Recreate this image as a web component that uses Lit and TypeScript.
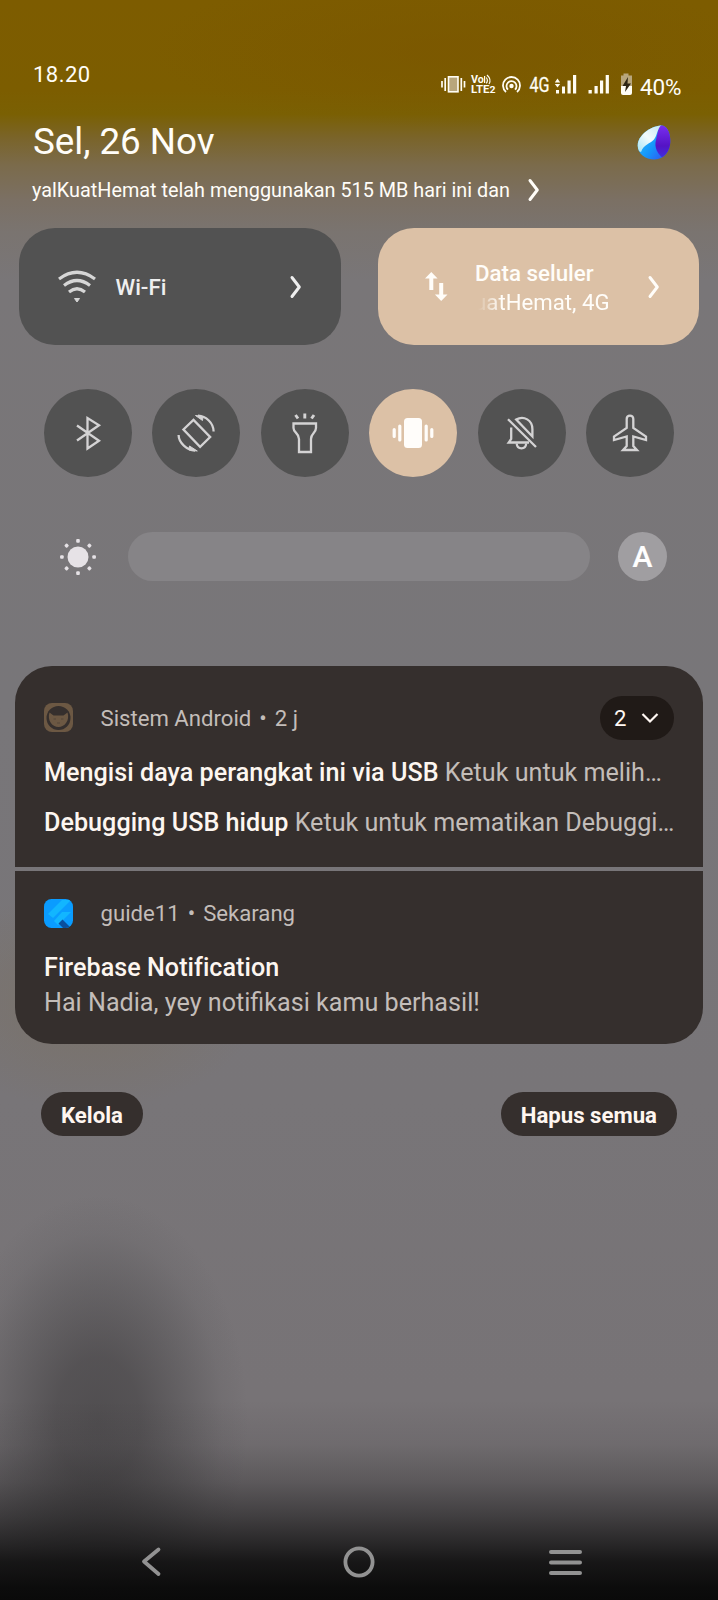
import { LitElement, html, css, svg } from "lit";
import { customElement } from "lit/decorators.js";

const chevron = html`<svg class="chev" viewBox="0 0 12 22" width="12" height="22"><path d="M2 1.500 9.300 11 2 20.500" fill="none" stroke="currentColor" stroke-width="3" stroke-linecap="round" stroke-linejoin="round"/></svg>`;

const toggles = [
  { on: false, art: svg`<path d="M-11-7.500 11 7.800-.500 15.500V-15L11-7.800-11 7.500"/>` },
  { on: false, art: svg`<rect x="-7" y="-12" width="14" height="24" transform="translate(.8 .3) rotate(-44)"/><path d="M2-17.300C10-17 17.500-10 17.600-1.500"/><path d="M-.500-17.500 6.500-12.500 7-16.500Z" fill="currentColor" stroke-width="1"/><path d="M-1 17.500C-9 17-17.300 10-17.400 2"/><path d="M1.300 18-6.500 13-7 17Z" fill="currentColor" stroke-width="1"/>` },
  { on: false, art: svg`<path d="M-11.500-9.500H11V-5C11 0 6 0 6 6V19H-6V6C-6 0-11.500 0-11.500-5Z"/><path stroke-width="2.900" d="M-.200-19.500V-14.500M-9.500-18-7-14.500M9-18 6.500-14.500"/>` },
  { on: true, art: svg`<rect x="-9" y="-15" width="18" height="30" rx="3.500" fill="currentColor" stroke="none"/><path stroke-width="3.200" stroke-linecap="round" d="M-13.200-7V7M13.200-7V7M-18.800-3.500V3.500M18.800-3.500V3.500"/>` },
  { on: false, art: svg`<path d="M-10.800-5.500V6L-13.300 9.500H7"/><path d="M-5.800-13.500C2-18 10.400-12.500 10.400-4V3.500Z"/><path d="M-5.300 10.500C-4.800 17 3.700 17 4.200 10.500M-14-13.800 14 14"/>` },
  { on: false, art: svg`<path d="M-3.300-14C-3.300-18.500 3.300-18.500 3.300-14V-5L16 3.500V7L3.300 3.500V13L7 17H-7L-3.300 13V3.500L-16 7V3.500L-3.300-5Z"/>` },
];

@customElement("app-root")
export class AppRoot extends LitElement {
  static styles = css`
    :host { display: block; font-family: Roboto, "Noto Sans", sans-serif; color: #fffdf8; }
    * { box-sizing: border-box; }
    svg { display: block; flex: none; overflow: visible; }
    .screen {
      width: 718px; height: 1600px; overflow: hidden; display: flex; flex-direction: column; white-space: nowrap;
      background:
        linear-gradient(to bottom, rgba(10,10,10,0) 1400px, rgba(10,10,10,.08) 1445px, rgba(10,10,10,.25) 1482px, rgba(10,10,10,.5) 1517px, rgba(10,10,10,.73) 1545px, rgba(10,10,10,.88) 1562px, rgba(10,10,10,.98) 1588px, #0a0a0a 1600px),
        radial-gradient(ellipse 150px 225px at 98px 1420px, rgba(66,64,66,.72) 0%, rgba(66,64,66,.64) 28%, rgba(68,67,69,.34) 60%, rgba(70,70,72,.1) 83%, rgba(70,70,72,0) 100%),
        radial-gradient(ellipse 170px 110px at 90px 1000px, rgba(122,112,98,.75), rgba(122,112,98,0)),
        radial-gradient(ellipse 300px 80px at 450px 50px, rgba(122,84,0,.5), rgba(122,84,0,0)),
        linear-gradient(to bottom, #7d5c00 0, #7c5d00 90px, #7a6003 114px, #7a642a 138px, #7b6b4b 165px, #7b7064 200px, #7a7470 232px, #797678 280px, #787679 700px, #787578 1100px, #777376 1390px, #777276 1600px);
    }
    .screen > * { flex: none; }
    .status { height: 111px; display: flex; align-items: flex-start; padding: 62px 0 0 33px; font-size: 22px; line-height: 26px; }
    .time { width: 408px; letter-spacing: .45px; }
    .glyphs { padding-top: 10px; width: 199px; }
    .pct { padding-top: 12px; font-size: 22.500px; letter-spacing: -.2px; }
    .date { height: 61px; display: flex; justify-content: space-between; padding: 10px 47px 0 33px; font-size: 36.800px; line-height: 42px; letter-spacing: -.05px; }
    .orb { margin-top: 4px; }
    .usage { height: 56px; display: flex; align-items: flex-start; gap: 19px; padding: 7px 0 0 32px; font-size: 19.830px; line-height: 24px; }
    .usage span { width: 477px; }
    .tiles { display: flex; justify-content: space-between; padding: 0 19px; height: 117px; }
    .tile { width: 321.500px; border-radius: 36px; background: #525252; display: flex; align-items: center; padding: 0 38.500px; font-size: 22.300px; line-height: 29px; font-weight: 500; color: #efefef; }
    .tile.on { background: #dcc1a6; color: #fffdf9; padding: 0 39.500px 0 47.500px; }
    .tile .name { flex: 1; padding: 2px 0 0 20px; }
    .tile.on .name { padding-left: 27px; }
    .carrier { font-size: 22.200px; font-weight: 400; width: 134.500px; display: flex; justify-content: flex-end; overflow: hidden; -webkit-mask-image: linear-gradient(to right, transparent 3px, #000 26px); mask-image: linear-gradient(to right, transparent 3px, #000 26px); }
    .toggles { display: flex; justify-content: space-between; padding: 44px 44px 0; height: 187px; }
    .toggle { width: 88px; height: 88px; border-radius: 50%; background: #525252; color: #d4d3d4; display: grid; place-items: center; }
    .toggle.on { background: #dcc1a6; color: #fffdfa; }
    .bright { height: 49px; display: flex; align-items: center; padding: 0 51px 0 59px; }
    .track { width: 462px; height: 49px; border-radius: 25px; background: #868487; margin: 0 28px 0 31px; }
    .auto { width: 49px; height: 49px; border-radius: 50%; background: #a09ea1; color: #fff; display: grid; place-items: center; font-weight: 500; font-size: 30px; line-height: 48px; -webkit-text-stroke: .2px #fff; }
    .cards { margin: 84.500px 15px 0; display: flex; flex-direction: column; gap: 4px; border-radius: 37px; overflow: hidden; }
    .card { background: #352f2d; padding: 0 29px; color: #c3bdb9; font-size: 25.150px; }
    .first { height: 201px; padding-top: 30px; }
    .second { height: 173.500px; padding-top: 28px; }
    .head { display: flex; align-items: center; font-size: 22.150px; line-height: 29px; height: 44px; }
    .second .head { height: 29px; }
    .src { flex: 1; padding-left: 27.500px; padding-top: 1px; }
    .dot { padding: 0 8px; }
    .count { width: 74px; height: 44px; border-radius: 22px; background: #201a17; color: #fff8f3; display: flex; align-items: center; justify-content: space-between; padding: 2px 15px 0 14px; }
    .line { line-height: 30px; margin-top: 18.500px; }
    .line + .line { margin-top: 19.500px; }
    b { font-weight: 500; color: #fdf6f0; letter-spacing: .03px; }
    .title { line-height: 30px; margin-top: 25px; }
    .body { line-height: 30px; margin-top: 5px; }
    .actions { display: flex; justify-content: space-between; align-items: flex-start; padding: 47.500px 41px 0; height: 479px; }
    .btn { height: 44px; border-radius: 22px; background: #352f2d; color: #fff6f0; font-weight: 700; font-size: 22.200px; line-height: 46px; padding: 0 20px; }
    .nav { display: flex; justify-content: space-between; align-items: center; padding: 0 136px 0 141px; height: 77px; color: #929292; }
  `;

  render() {
    return html`
      <div class="screen">
        <div class="status">
          <div class="time">18.20</div>
          <div class="glyphs">
            <svg width="195" height="26" viewBox="441 72 195 26" fill="none" stroke="#fffdf4">
              <rect x="448.500" y="76.800" width="9.500" height="15" fill="#b8a67c" stroke-width="1.600"/>
              <path d="M445.200 78V91M461.300 78V91M442 81V87.500M464.500 81V87.500" stroke-width="1.700"/>
              <g fill="#fffdf4" stroke="none" font-weight="700">
                <text x="471" y="83" font-size="10" textLength="12.800" lengthAdjust="spacingAndGlyphs">Vo</text>
                <text x="471" y="93.300" font-size="10" textLength="18.300" lengthAdjust="spacingAndGlyphs">LTE</text>
                <text x="489.500" y="93.300" font-size="8.500" textLength="6" lengthAdjust="spacingAndGlyphs">2</text>
              </g>
              <path d="M484.600 76V83M486.300 77.500Q488.500 80.500 486.300 83.300M487 75Q491.800 79.500 489 84" stroke-width="1.200"/>
              <circle cx="511.500" cy="86" r="2.200" fill="#fffdf4" stroke="none"/>
              <path d="M508 89.700A5 5 0 1 1 515 89.700M506 92A8.500 8.500 0 1 1 517 92" stroke-width="1.800"/>
              <text x="529.500" y="91.500" fill="#fffdf4" stroke="#fffdf4" stroke-width=".3" font-size="19.500" textLength="20" lengthAdjust="spacingAndGlyphs">4G</text>
              <path fill="#fffdf4" stroke="none" d="M554.800 82.500 557.500 78.500 560.200 82.500ZM554.800 84 557.500 87.500 560.200 84ZM556 90h3v3.500h-3ZM562 86.500h3v7h-3ZM567.500 80.500h3.200v13h-3.200ZM573 75h3.200v18.500h-3.200ZM588.500 90h3.300v3.500h-3.300ZM594.500 86h3.200v7.500h-3.200ZM600 80.500h3.200v13H600ZM605.700 75h3.200v18.500h-3.200Z"/>
              <path d="M623.500 73.500h5v2h3.500v11h-11v-11h2.500Z" fill="#b8a67c" stroke="none"/><path d="M621 86h11v7a2 2 0 0 1-2 2h-7a2 2 0 0 1-2-2Z" fill="#fffdf4" stroke="none"/>
              <path d="M628 77 622.500 86H626L625 92 631 83.500H627.500Z" fill="#2e2614" stroke="none"/>
            </svg>
          </div>
          <div class="pct">40%</div>
        </div>
        <div class="date">
          <span>Sel, 26 Nov</span>
          <svg class="orb" width="34" height="35" viewBox="0 0 34 35">
            <defs>
              <linearGradient id="o1" x1="0" y1="0" x2="0" y2="1"><stop stop-color="#7a2ff0"/><stop offset=".6" stop-color="#5413c4"/><stop offset="1" stop-color="#3b35e6"/></linearGradient>
              <linearGradient id="o2" x1="0" y1="0" x2="1" y2=".8"><stop stop-color="#2ed0ff"/><stop offset=".6" stop-color="#1594fa"/><stop offset="1" stop-color="#3450f0"/></linearGradient>
              <linearGradient id="o3" x1="0" y1="1" x2="1" y2="0"><stop stop-color="#9fe2f5"/><stop offset=".5" stop-color="#f2fbfd"/><stop offset="1" stop-color="#c4e6f2"/></linearGradient>
              <clipPath id="oc"><path d="M24 .600C29.500 .300 33.300 7 33.300 16.500 33.300 26 27 34.500 17.500 34.500 8 34.500 .700 28.500 .700 20.500 .700 11 13 1.200 24 .600Z"/></clipPath>
            </defs>
            <g clip-path="url(#oc)"><rect width="34" height="35" fill="url(#o2)"/><path d="M23 0H34V35H28C20 29 17 22 19 15 20.500 9 21 4 23 0Z" fill="url(#o1)"/><path d="M-1 0H24.500C20 4 20.500 10 17 14.500 13 19 7 19 4 27L-1 25Z" fill="url(#o3)"/></g>
          </svg>
        </div>
        <div class="usage"><span>yalKuatHemat telah menggunakan 515 MB hari ini dan</span>${chevron}</div>
        <div class="tiles">
          <div class="tile">
            <svg width="38" height="34" viewBox="0 0 38 34" fill="none" stroke="#d6d6d6" stroke-width="3.200"><path d="M1 9Q19-4.500 37 9M6 15.500Q19 5.500 32 15.500M11 22Q19 15.500 27 22"/><path d="M16.500 28.500H21.500L19 32Z" fill="#d6d6d6" stroke-width="1"/></svg>
            <div class="name">Wi-Fi</div>${chevron}
          </div>
          <div class="tile on">
            <svg width="23" height="29" viewBox="0 0 23 29" fill="currentColor"><path d="M6.300 0 12.600 6.500H8.300V18H4.300V6.500H0ZM16.200 29 9.900 22.500H14.200V11H18.200V22.500H22.500Z"/></svg>
            <div class="name">Data seluler<div class="carrier">uatHemat, 4G</div></div>${chevron}
          </div>
        </div>
        <div class="toggles">
          ${toggles.map((t) => html`<div class="toggle ${t.on ? "on" : ""}"><svg width="44" height="44" viewBox="-22 -22 44 44" fill="none" stroke="currentColor" stroke-width="2.300">${t.art}</svg></div>`)}
        </div>
        <div class="bright">
          <svg width="38" height="38" viewBox="-19 -19 38 38" fill="#e6e2e6"><circle r="10.500"/>
            ${[0, 45, 90, 135, 180, 225, 270, 315].map((a) => svg`<rect x="14.300" y="-1.800" width="3.600" height="3.600" rx="1" transform="rotate(${a})"/>`)}
          </svg>
          <div class="track"></div>
          <div class="auto">A</div>
        </div>
        <div class="cards">
          <div class="card first">
            <div class="head">
              <svg width="29" height="29" viewBox="0 0 29 29"><rect width="29" height="29" rx="8" fill="#6c5843"/><circle cx="14.500" cy="15" r="12" fill="#352f2d"/><path d="M5.500 9.500 9.500 12.500H19.500L23.500 9.500C26 17 21 24 14.500 24S3 17 5.500 9.500Z" fill="#6c5843"/><path d="M9.500 16h2.500M17 16h2.500M13 20h3" stroke="#55473a" stroke-width="1.200"/></svg>
              <div class="src">Sistem Android<span class="dot">•</span>2 j</div>
              <div class="count">2<svg width="18" height="11" viewBox="0 0 18 11"><path d="M1.500 1 9 8.500 16.500 1" fill="none" stroke="currentColor" stroke-width="2.200"/></svg></div>
            </div>
            <div class="line"><b>Mengisi daya perangkat ini via USB</b> Ketuk untuk melih…</div>
            <div class="line"><b>Debugging USB hidup</b> Ketuk untuk mematikan Debuggi…</div>
          </div>
          <div class="card second">
            <div class="head">
              <svg width="29" height="29" viewBox="0 0 29 29"><defs><clipPath id="fc"><rect width="29" height="29" rx="7.500"/></clipPath></defs><g clip-path="url(#fc)"><rect width="29" height="29" fill="#0a9cff"/><path d="M4 15 18 1H27L9 19Z" fill="#12b6ff"/><path d="M10 22 18 13H27L14 26Z" fill="#12b6ff"/><path d="M14.500 24.500 18.500 20.500 28 30H20Z" fill="#0a4f9e"/></g></svg>
              <div class="src">guide11<span class="dot">•</span>Sekarang</div>
            </div>
            <div class="title"><b>Firebase Notification</b></div>
            <div class="body">Hai Nadia, yey notifikasi kamu berhasil!</div>
          </div>
        </div>
        <div class="actions"><div class="btn">Kelola</div><div class="btn">Hapus semua</div></div>
        <div class="nav">
          <svg width="28" height="30" viewBox="0 0 28 30"><path d="M17.500 2.500 3 14.500 17.500 27" fill="none" stroke="currentColor" stroke-width="3.800" stroke-linecap="round" stroke-linejoin="round"/></svg>
          <svg width="32" height="32" viewBox="-16 -16 32 32"><circle r="13.600" fill="none" stroke="currentColor" stroke-width="3.800"/></svg>
          <svg width="33" height="26" viewBox="0 0 33 26"><path d="M2 3H31M2 13.500H31M2 24H31" stroke="currentColor" stroke-width="4" stroke-linecap="round"/></svg>
        </div>
      </div>`;
  }
}
